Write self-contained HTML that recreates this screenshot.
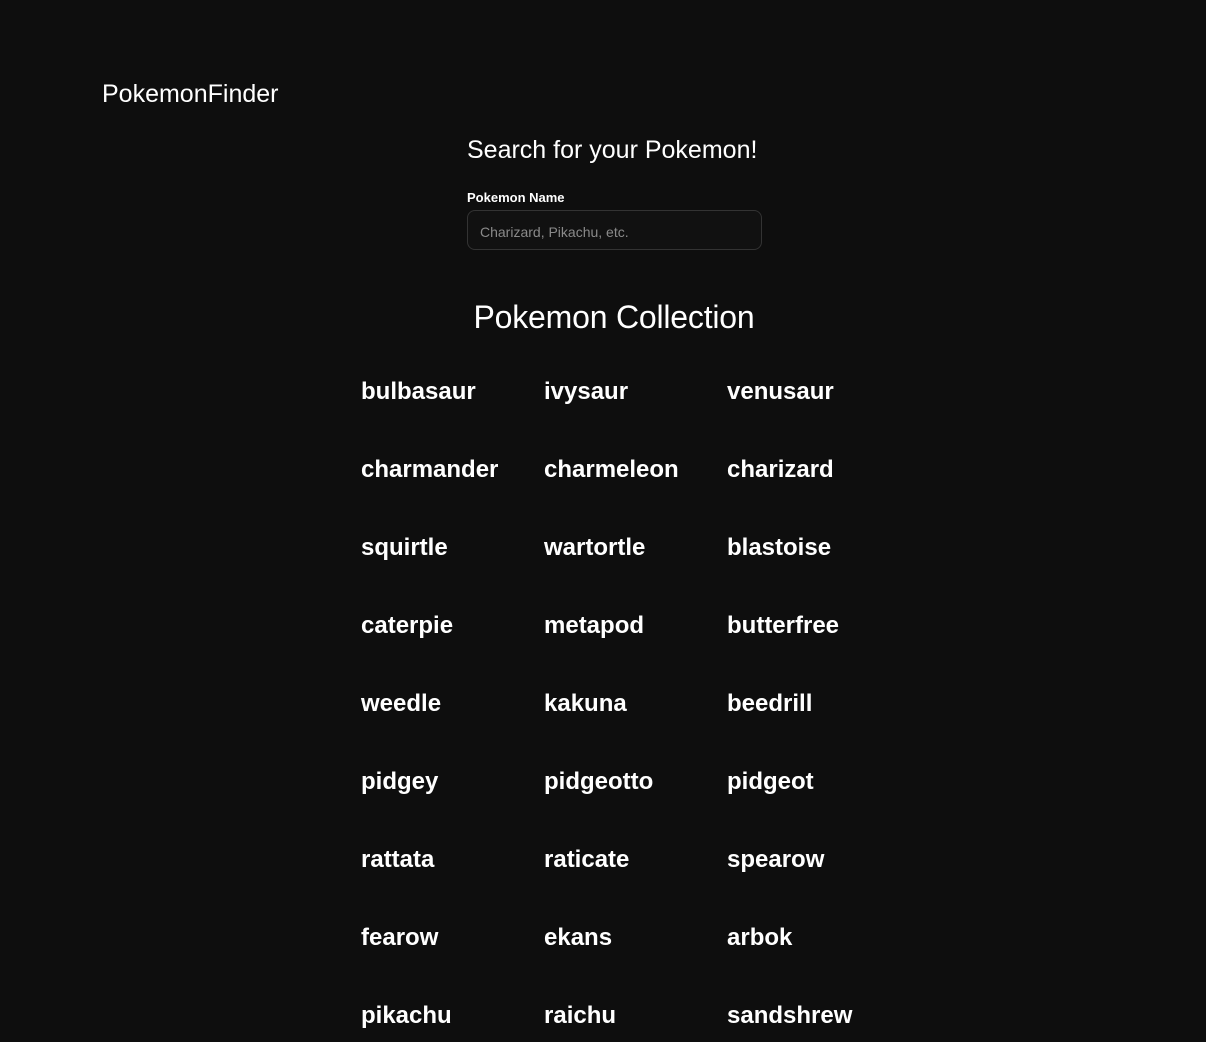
<!DOCTYPE html>
<html><head><style>
body{margin:0;background:#0e0e0e;width:1206px;height:1042px;overflow:hidden;font-family:"Liberation Sans",sans-serif;color:#fff;position:relative}
.a{position:absolute;white-space:nowrap;line-height:1}
.input{position:absolute;left:467px;top:210px;width:293px;height:38px;border:1px solid #333;border-radius:8px;background:#111;box-sizing:content-box}
.input span{position:absolute;left:12px;top:13px;font-size:14px;color:#8a8a8a}
.p{position:absolute;font-size:24px;font-weight:bold;line-height:1}
</style></head><body>
<div class="a" style="left:102px;top:82px;font-size:25px">PokemonFinder</div>
<div class="a" style="left:467px;top:138px;font-size:25px">Search for your Pokemon!</div>
<div class="a" style="left:467px;top:191px;font-size:13px;font-weight:bold">Pokemon Name</div>
<div class="input"><span>Charizard, Pikachu, etc.</span></div>
<div class="a" style="left:0;width:1228px;text-align:center;top:301px;font-size:32px;letter-spacing:-0.2px">Pokemon Collection</div>
<div id="g"></div>
<script>
var n=["bulbasaur","ivysaur","venusaur","charmander","charmeleon","charizard","squirtle","wartortle","blastoise","caterpie","metapod","butterfree","weedle","kakuna","beedrill","pidgey","pidgeotto","pidgeot","rattata","raticate","spearow","fearow","ekans","arbok","pikachu","raichu","sandshrew"];
var h="";n.forEach(function(s,i){h+='<div class="p" style="left:'+[361,544,727][i%3]+'px;top:'+(380+78*Math.floor(i/3))+'px">'+s+'</div>'});
document.getElementById("g").innerHTML=h;
</script>
</body></html>
